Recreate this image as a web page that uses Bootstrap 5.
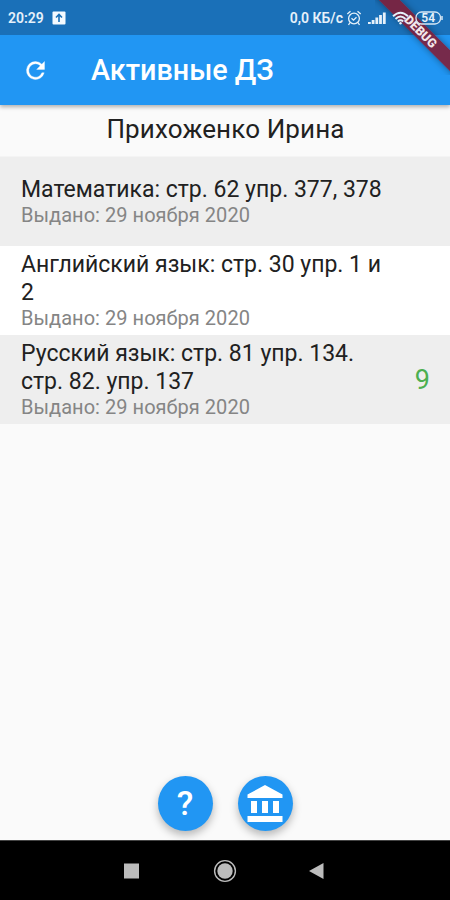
<!DOCTYPE html>
<html lang="ru">
<head>
<meta charset="utf-8">
<meta name="viewport" content="width=device-width, initial-scale=1">
<title>Активные ДЗ</title>
<link href="https://cdn.jsdelivr.net/npm/bootstrap@5.3.0/dist/css/bootstrap.min.css" rel="stylesheet">
<style>
body{font-family:Roboto,"Liberation Sans",sans-serif;background:#fafafa;color:#212121;height:900px;overflow:hidden}
svg{display:block;flex:none}
.status-bar{height:35px;background:#1a70b8;color:#e6f1fa;font-size:14px;font-weight:600;padding:1px 7px 0 8px;z-index:2}
.status-icons{z-index:1;gap:6px}
.traffic{margin-right:-3px}
.app-bar{height:70px;background:#2196f3;color:#fff;padding:0 22px;box-shadow:0 2px 4px rgba(0,0,0,.3);z-index:1}
.app-title{font-size:28.75px;font-weight:500;line-height:1;margin:0 0 0 42px}
.student{height:51px;font-size:26px;line-height:49px;letter-spacing:.13px;padding-left:1px}
.task{height:89px;padding:0 20px 0 21px;background:#fff}
.task.shade{background:#eee}
.task-list{border-top:1px solid #f4f4f4}
.task-title{font-size:23px;line-height:27.5px}
.task-date{font-size:20px;line-height:24px;letter-spacing:.04px;color:#858585}
.task-text{width:366px}
.grade{font-size:27px;color:#4caf50;padding-top:2px}
.fab{width:55px;height:55px;background:#2196f3;color:#fff;box-shadow:0 4px 8px rgba(0,0,0,.28)}
.actions{gap:25px;padding-bottom:9.5px}
.question{font-size:34px;font-weight:500;line-height:1;margin-top:-1px}
.nav-keys{height:60px;background:#000;border-top:1px solid #444}
.debug-corner{width:75px;height:75px;right:0;top:0}
.debug-band{width:150px;height:14.5px;left:-29px;top:23.5px;transform:rotate(45deg);background:rgba(128,30,56,.9);color:#f3e6ea;font-size:12.5px;font-weight:900;line-height:15px;box-shadow:0 0 7px rgba(0,0,0,.4)}
</style>
<script src="https://cdn.jsdelivr.net/npm/bootstrap@5.3.0/dist/js/bootstrap.bundle.min.js"></script>
</head>
<body class="d-flex flex-column m-0">
<div class="status-bar d-flex align-items-center flex-shrink-0 position-relative">
  <div class="debug-corner position-absolute overflow-hidden"><div class="debug-band position-absolute text-center">DEBUG</div></div>
  <span>20:29</span>
  <svg class="ms-2" width="14" height="14" viewBox="0 0 14 14"><rect x=".5" y=".5" width="13" height="13" rx="1" fill="#f4faff"/><path d="M7 11V4M4 6.500 7 3.500l3 3" fill="none" stroke="#1a70b8" stroke-width="1.6"/></svg>
  <div class="status-icons ms-auto d-flex align-items-center position-relative">
    <span class="traffic">0,0 КБ/с</span>
    <svg width="16" height="16" viewBox="0 0 15 16" fill="none" stroke="#e6f1fa" stroke-width="1.3"><circle cx="7.5" cy="8.500" r="5.4"/><path d="M.8 4 4 1.200M14.200 4 11 1.200M3.500 12.500 2 15M11.500 12.500 13 15M5 8.200l2 2 3-3"/></svg>
    <svg width="18" height="14" viewBox="0 0 18 14" fill="#e6f1fa"><path d="M0 11h2.800v2H0zM3.700 9h2.800v4H3.700zM7.400 6.500h2.800V13H7.400zM11.100 4h2.800v9h-2.800zM14.900 1.500h2.800V13h-2.800z"/></svg>
    <svg width="17" height="14" viewBox="0 0 17 14" fill="none" stroke="#e6f1fa" stroke-width="1.9"><path d="M1 5.200Q8.500-1.800 16 5.200M3.500 8Q8.500 3.200 13.500 8M5.800 10.500Q8.500 8.200 11.200 10.500"/><circle cx="8.500" cy="12.300" r="1.200" fill="#e6f1fa" stroke="none"/></svg>
    <svg width="28" height="14" viewBox="0 0 28 14"><rect x="1" y="1" width="24.500" height="12" rx="5.500" fill="none" stroke="#d6e7f5" stroke-width="1.300"/><path d="M27 5v4" stroke="#d6e7f5" stroke-width="1.500"/><text x="13.200" y="11.200" text-anchor="middle" font-size="12" font-weight="600" fill="#e6f1fa">54</text></svg>
  </div>
</div>
<header class="app-bar d-flex align-items-center flex-shrink-0 position-relative">
  <svg width="27" height="27" viewBox="0 0 24 24" fill="#fff" stroke="#fff" stroke-width=".3"><path d="M17.650 6.350A7.960 7.960 0 0 0 12 4a8 8 0 1 0 7.730 10h-2.080A6 6 0 1 1 12 6c1.660 0 3.140.69 4.220 1.780L13 11h7V4z"/></svg>
  <h1 class="app-title">Активные ДЗ</h1>
</header>
<main class="flex-grow-1 d-flex flex-column">
  <div class="student text-center">Прихоженко Ирина</div>
  <div class="task-list">
    <section class="task shade d-flex align-items-center"><div class="task-text"><div class="task-title">Математика: стр. 62 упр. 377, 378</div><div class="task-date">Выдано: 29 ноября 2020</div></div></section>
    <section class="task d-flex align-items-center"><div class="task-text"><div class="task-title">Английский язык: стр. 30 упр. 1 и 2</div><div class="task-date">Выдано: 29 ноября 2020</div></div></section>
    <section class="task shade d-flex align-items-center"><div class="task-text"><div class="task-title">Русский язык: стр. 81 упр. 134.<br>стр. 82. упр. 137</div><div class="task-date">Выдано: 29 ноября 2020</div></div><span class="grade ms-auto">9</span></section>
  </div>
  <div class="actions d-flex justify-content-center mt-auto">
    <button class="fab btn rounded-circle border-0 p-0 d-flex align-items-center justify-content-center"><span class="question">?</span></button>
    <button class="fab btn rounded-circle border-0 p-0 d-flex align-items-center justify-content-center" aria-label="Школа"><svg width="36" height="37" viewBox="0 0 36 37" fill="#fff"><path d="M.5 9.500 18 0l17.500 9.500V13H.5zM4 16h6v12H4zM15 16h6v12h-6zM26 16h6v12h-6zM.5 31h35v6H.5z"/></svg></button>
  </div>
</main>
<nav class="nav-keys d-flex align-items-center justify-content-center flex-shrink-0">
  <svg width="206" height="24" viewBox="0 0 206 24" fill="#bcbcbc"><rect x="2" y="4.500" width="15" height="15"/><circle cx="103" cy="12" r="7.700"/><circle cx="103" cy="12" r="10.400" fill="none" stroke="#bcbcbc" stroke-width="1.400"/><path d="M187 12 201.500 4v16z"/></svg>
</nav>
</body>
</html>
